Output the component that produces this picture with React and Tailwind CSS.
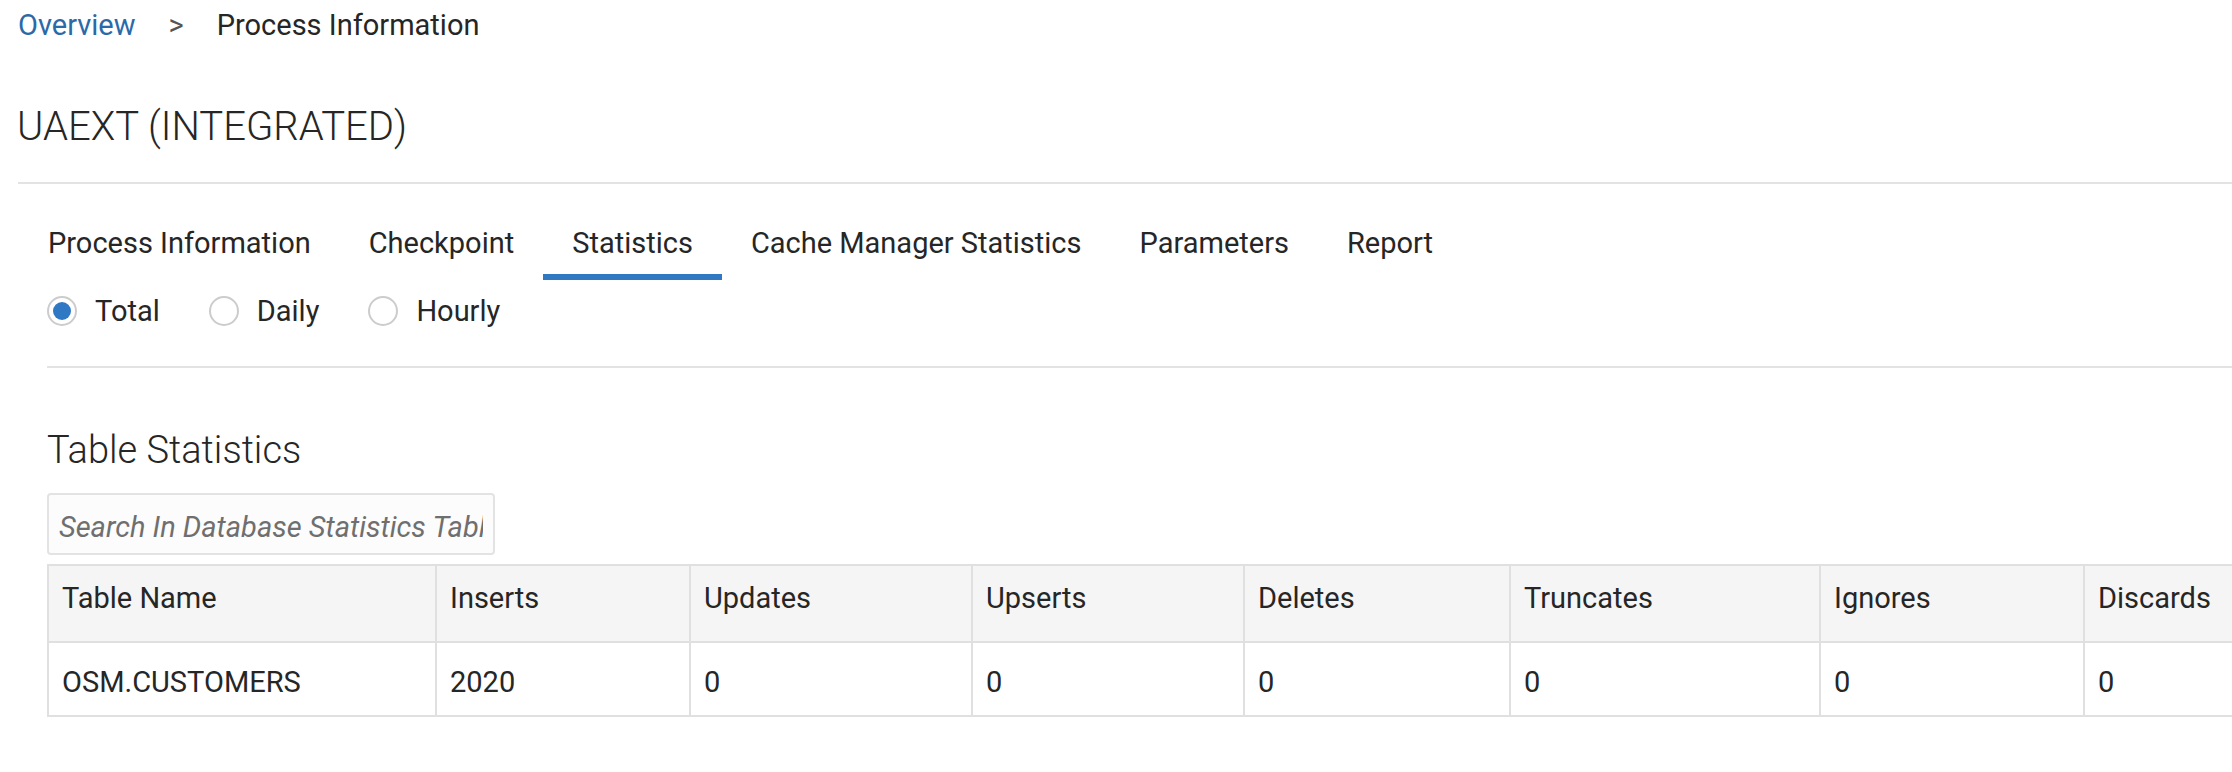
import { useState } from 'react';

const tabs = ['Process Information', 'Checkpoint', 'Statistics', 'Cache Manager Statistics', 'Parameters', 'Report'];

const columns = [
  { label: 'Table Name', width: 'w-[388px]' },
  { label: 'Inserts', width: 'w-[254px]' },
  { label: 'Updates', width: 'w-[282px]' },
  { label: 'Upserts', width: 'w-[272px]' },
  { label: 'Deletes', width: 'w-[266px]' },
  { label: 'Truncates', width: 'w-[310px]' },
  { label: 'Ignores', width: 'w-[264px]' },
  { label: 'Discards', width: 'w-[300px]' },
];

const rows = [['OSM.CUSTOMERS', '2020', '0', '0', '0', '0', '0', '0']];

function Radio({ label, checked, onClick }) {
  return (
    <button onClick={onClick} className="flex items-center gap-[18px] cursor-pointer">
      <span className="flex h-[30px] w-[30px] items-center justify-center rounded-full border-2 border-[#cccccc] bg-white">
        {checked && <span className="h-[18px] w-[18px] rounded-full bg-[#2f78c4]" />}
      </span>
      <span className="text-[29px] leading-[34px]">{label}</span>
    </button>
  );
}

export default function App() {
  const [activeTab, setActiveTab] = useState('Statistics');
  const [mode, setMode] = useState('Total');

  return (
    <div className="h-[772px] w-full overflow-hidden bg-white text-[#262626] font-['Roboto',sans-serif]">
      {/* Breadcrumb */}
      <div className="flex h-[52px] items-center gap-[33px] pl-[18px] text-[29px]">
        <a className="text-[#2a6aa9] cursor-pointer">Overview</a>
        <span className="text-[#555555]">&gt;</span>
        <span>Process Information</span>
      </div>

      {/* Title */}
      <div className="mt-[20px] flex h-[110px] items-center pl-[17px]">
        <h1 className="text-[40px] font-light leading-none">UAEXT (INTEGRATED)</h1>
      </div>
      <div className="ml-[18px] h-[2px] bg-[#e3e3e3]" />

      {/* Tabs */}
      <div className="ml-[19px] mt-[30px] flex">
        {tabs.map((t) => (
          <button
            key={t}
            onClick={() => setActiveTab(t)}
            className={`flex h-[66px] items-center px-[29px] text-[29px] border-b-[6px] ${
              activeTab === t ? 'border-[#3079c2]' : 'border-transparent'
            }`}
          >
            {t}
          </button>
        ))}
      </div>

      <div className="pl-[47px]">
        {/* Mode radios */}
        <div className="mt-[16px] flex h-[30px] items-center gap-[49px]">
          {['Total', 'Daily', 'Hourly'].map((m) => (
            <Radio key={m} label={m} checked={mode === m} onClick={() => setMode(m)} />
          ))}
        </div>
        <div className="mt-[40px] h-[2px] bg-[#e3e3e3]" />

        {/* Table statistics */}
        <div className="mt-[59px] flex h-[46px] items-center">
          <h2 className="text-[38px] font-light leading-none">Table Statistics</h2>
        </div>
        <input
          placeholder="Search In Database Statistics Table"
          className="mt-[20px] block h-[62px] w-[448px] rounded-[4px] border-2 border-[#e3e3e3] bg-[#fcfcfc] px-[10px] pt-[5px] text-[29px] italic placeholder:text-[#6f6f6f] outline-none"
        />

        <div className="mt-[9px] w-max border-t-2 border-[#e0e0e0]">
          <div className="flex border-b-2 border-[#e0e0e0] bg-[#f5f5f5]">
            {columns.map((c) => (
              <div key={c.label} className={`${c.width} h-[75px] shrink-0 border-l-2 border-[#e0e0e0] pl-[13px] pt-[15px] text-[29px] leading-[34px]`}>
                {c.label}
              </div>
            ))}
          </div>
          {rows.map((r, i) => (
            <div key={i} className="flex border-b-2 border-[#e0e0e0] bg-white">
              {r.map((v, j) => (
                <div key={j} className={`${columns[j].width} h-[72px] shrink-0 border-l-2 border-[#e0e0e0] pl-[13px] pt-[22px] text-[29px] leading-[34px]`}>
                  {v}
                </div>
              ))}
            </div>
          ))}
        </div>
      </div>
    </div>
  );
}
